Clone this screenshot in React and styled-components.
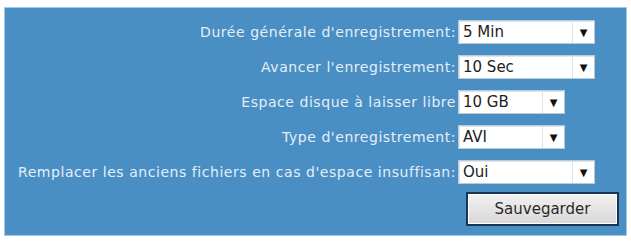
import styled, { createGlobalStyle } from 'styled-components'

const GlobalStyle = createGlobalStyle`
  html, body {
    margin: 0;
    background: #ffffff;
  }
`

const Page = styled.div`
  padding: 7px 4px 5px 4px;
  font-family: "DejaVu Sans", Verdana, sans-serif;
`

const Panel = styled.div`
  background: #4a8fc4;
  border: 1px solid #9fcbe8;
  height: 229px;
  box-sizing: border-box;
  padding: 12px 0 0 0;
`

const Form = styled.div`
  display: grid;
  grid-template-columns: 1fr 168px;
  column-gap: 2px;
  row-gap: 11px;
  align-items: center;
`

const Label = styled.label`
  text-align: right;
  color: #e4eef7;
  font-size: 14px;
  letter-spacing: 0.55px;
  white-space: nowrap;
`

const Select = styled.div`
  display: flex;
  width: ${(p) => p.$width}px;
  height: 24px;
  box-sizing: border-box;
  background: #ffffff;
  border: 1px solid #b9cad8;
  box-shadow: inset 1px 1px 0 #dfe6ec;
`

const Value = styled.span`
  flex: 1;
  padding-left: 4px;
  font-size: 15px;
  line-height: 22px;
  color: #222222;
`

const Arrow = styled.span`
  width: 21px;
  border-left: 1px solid #dde3e8;
  display: flex;
  align-items: center;
  justify-content: center;
  font-size: 10px;
  color: #111111;
`

const Button = styled.button`
  grid-column: 2;
  margin: -3px 0 0 8px;
  width: 153px;
  height: 34px;
  border: 2px solid #183654;
  background: linear-gradient(#f3f2f2, #d8d6d6);
  box-shadow: inset 0 0 0 1px #ffffff;
  font-family: "DejaVu Sans", Verdana, sans-serif;
  font-size: 15px;
  color: #2a2a2a;
  padding: 0;
`

const fields = [
  { label: "Durée générale d'enregistrement:", value: '5 Min', width: 137 },
  { label: "Avancer l'enregistrement:", value: '10 Sec', width: 137 },
  { label: 'Espace disque à laisser libre', value: '10 GB', width: 107 },
  { label: "Type d'enregistrement:", value: 'AVI', width: 107 },
  { label: "Remplacer les anciens fichiers en cas d'espace insuffisan:", value: 'Oui', width: 137 },
]

export default function App() {
  return (
    <Page>
      <GlobalStyle />
      <Panel>
        <Form>
          {fields.map((f) => (
            <>
              <Label key={f.label + 'l'}>{f.label}</Label>
              <Select key={f.label + 's'} $width={f.width}>
                <Value>{f.value}</Value>
                <Arrow>▼</Arrow>
              </Select>
            </>
          ))}
          <Button>Sauvegarder</Button>
        </Form>
      </Panel>
    </Page>
  )
}
